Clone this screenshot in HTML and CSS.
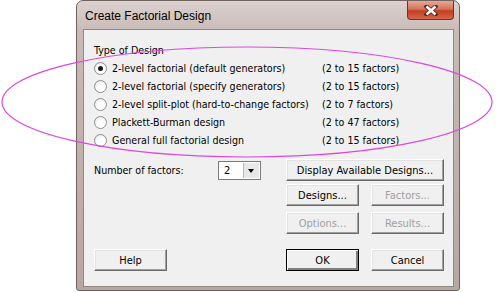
FILE: index.html
```html
<!DOCTYPE html>
<html lang="en">
<head>
    <meta charset="UTF-8">
    <title>Create Factorial Design</title>
    <link rel="stylesheet" href="styles.css">
</head>
<body>

    <div class="window">
        <div class="titlebar">
            <span class="title">Create Factorial Design</span>
            <div class="close">
                <svg width="16" height="11" viewBox="0 0 16 11">
                    <path d="M3.5 1.5 L12.5 9.5 M12.5 1.5 L3.5 9.5" stroke="#5a2a22" stroke-width="4.2" stroke-linecap="square"/>
                    <path d="M3.5 1.5 L12.5 9.5 M12.5 1.5 L3.5 9.5" stroke="#fff" stroke-width="2.4"/>
                </svg>
            </div>
        </div>

        <div class="client">
            <div class="group-title">Type of Design</div>
            <div class="designs">
                <span class="radio checked"></span>
                <span>2-level factorial (default generators)</span>
                <span>(2 to 15 factors)</span>

                <span class="radio"></span>
                <span>2-level factorial (specify generators)</span>
                <span>(2 to 15 factors)</span>

                <span class="radio"></span>
                <span>2-level split-plot (hard-to-change factors)</span>
                <span>(2 to 7 factors)</span>

                <span class="radio"></span>
                <span>Plackett-Burman design</span>
                <span>(2 to 47 factors)</span>

                <span class="radio"></span>
                <span>General full factorial design</span>
                <span>(2 to 15 factors)</span>
            </div>

            <div class="controls">
                <div class="factors-row">
                    <span class="label">Number of factors:</span>
                    <div class="combo">
                        <span class="value">2</span>
                        <span class="arrow"></span>
                    </div>
                </div>
                <div class="buttons">
                    <button class="wide">Display Available Designs...</button>
                    <div class="pair gap-small">
                        <button>Designs...</button>
                        <button disabled>Factors...</button>
                    </div>
                    <div class="pair gap-mid">
                        <button disabled>Options...</button>
                        <button disabled>Results...</button>
                    </div>
                </div>
            </div>

            <div class="footer">
                <button>Help</button>
                <div class="pair">
                    <button class="default">OK</button>
                    <button>Cancel</button>
                </div>
            </div>
        </div>
    </div>

    <svg class="marker" width="496" height="292" viewBox="0 0 496 292">
        <ellipse cx="247" cy="102" rx="245" ry="55" fill="none" stroke="#dc48dc" stroke-width="1.2"/>
    </svg>

</body>
</html>
```

FILE: styles.css
```css
body {
    margin: 0;
    background: #fff;
    font-family: "DejaVu Sans Condensed", "Liberation Sans", sans-serif;
    font-size: 10.6px;
    color: #000;
    width: 496px;
    height: 292px;
    overflow: hidden;
    position: relative;
}
.window {
    margin-left: 76px;
    width: 382px;
    height: 289px;
    border: 1px solid #6f625f;
    border-radius: 7px 7px 3px 3px;
    background: linear-gradient(#dcd2d0, #c9bab6 30px, #b8a6a2);
    display: flex;
    flex-direction: column;
}
.titlebar {
    height: 28px;
    display: flex;
    align-items: flex-start;
    justify-content: space-between;
    padding-left: 8px;
}
.title {
    font-family: "Liberation Sans", sans-serif;
    font-size: 12px;
    margin-top: 8px;
}
.close {
    width: 45px;
    height: 18px;
    margin-right: 5px;
    border: 1px solid #6a3328;
    border-top: none;
    border-radius: 0 0 4px 4px;
    background: linear-gradient(#e9a795, #d4745d 45%, #c23e22 55%, #d5684a);
    display: flex;
    align-items: center;
    justify-content: center;
}
.client {
    flex: 1;
    margin: 0 5px 3px 6px;
    border: 1px solid #948683;
    background: #f0f0f0;
    padding: 11px 9px 0 10px;
    position: relative;
}
.group-title {
    line-height: 18px;
}
.designs {
    display: grid;
    grid-template-columns: 18px 210px auto;
    grid-auto-rows: 18px;
    align-items: center;
}
.radio {
    width: 11px;
    height: 11px;
    border: 1px solid #8f8f8f;
    border-radius: 50%;
    background: radial-gradient(circle at 60% 65%, #fff 40%, #dcdcdc);
    position: relative;
}
.radio.checked::after {
    content: "";
    position: absolute;
    left: 3px;
    top: 3px;
    width: 5px;
    height: 5px;
    border-radius: 50%;
    background: #1a1a1a;
}
.controls {
    display: flex;
    justify-content: space-between;
    margin-top: 10px;
}
.factors-row {
    display: flex;
    align-items: center;
    height: 22px;
}
.label {
    width: 124px;
}
.combo {
    width: 41px;
    height: 17px;
    border: 1px solid #7a7a7a;
    background: #fff;
    display: flex;
    justify-content: space-between;
}
.value {
    padding-left: 5px;
    line-height: 17px;
    font-size: 11px;
}
.arrow {
    width: 15px;
    margin: 1px;
    background: #e8e8e8;
    border-left: 1px solid #b8b8b8;
    position: relative;
}
.arrow::after {
    content: "";
    position: absolute;
    left: 4px;
    top: 6px;
    border-left: 3.5px solid transparent;
    border-right: 3.5px solid transparent;
    border-top: 4px solid #000;
}
.buttons {
    width: 158px;
    display: flex;
    flex-direction: column;
}
.pair {
    display: flex;
    justify-content: space-between;
    width: 158px;
}
.gap-small {
    margin-top: 3px;
}
.gap-mid {
    margin-top: 6px;
}
button {
    font-family: inherit;
    font-size: 11px;
    width: 73px;
    height: 22px;
    padding: 0;
    background: #f0f0f0;
    color: #000;
    border: 1px solid;
    border-color: #fff #6a6a6a #6a6a6a #fff;
    box-shadow: inset -1px -1px 0 #a0a0a0, inset 1px 1px 0 #e3e3e3;
}
button:disabled {
    color: #a0a0a0;
}
button.wide {
    width: 158px;
}
button.default {
    border-color: #000;
    box-shadow: inset 1px 1px 0 #fff, inset -2px -2px 0 #808080;
}
.footer {
    display: flex;
    justify-content: space-between;
    margin-top: 15px;
}
.marker {
    position: absolute;
    left: 0;
    top: 0;
    pointer-events: none;
}
```
